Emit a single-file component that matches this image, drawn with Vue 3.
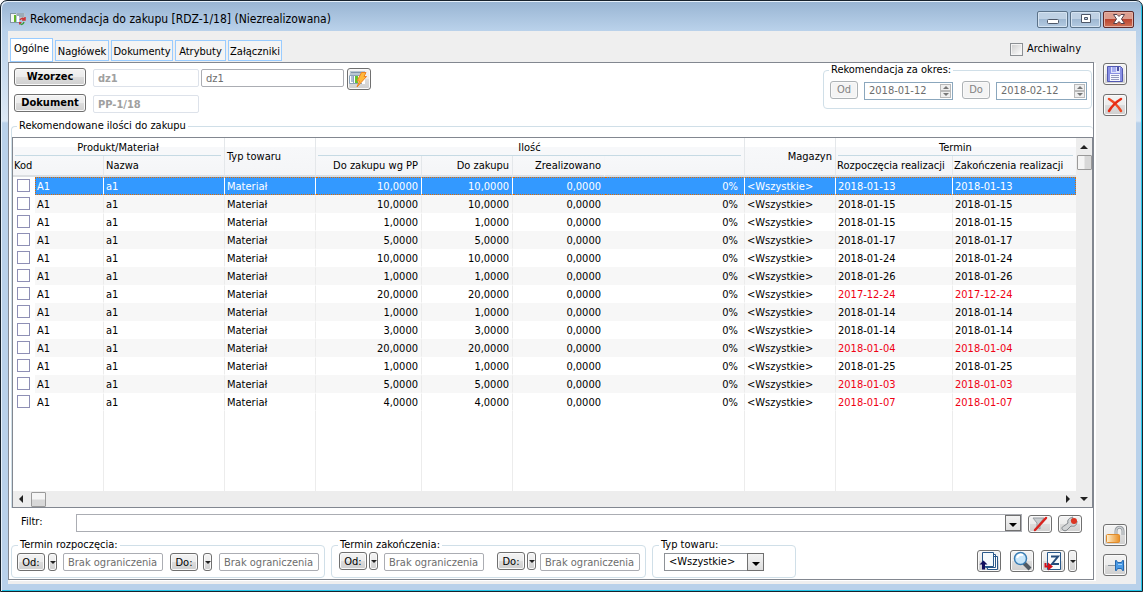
<script setup>
import { ref } from 'vue'

const tabs = ['Ogólne', 'Nagłówek', 'Dokumenty', 'Atrybuty', 'Załączniki']
const active = ref('Ogólne')
const selected = ref(0)
const late = ['2017-12-24', '2018-01-04', '2018-01-03', '2018-01-07']
const rows = [
  ['10,0000', '2018-01-13'],
  ['10,0000', '2018-01-15'],
  ['1,0000', '2018-01-15'],
  ['5,0000', '2018-01-17'],
  ['10,0000', '2018-01-24'],
  ['1,0000', '2018-01-26'],
  ['20,0000', '2017-12-24'],
  ['1,0000', '2018-01-14'],
  ['3,0000', '2018-01-14'],
  ['20,0000', '2018-01-04'],
  ['1,0000', '2018-01-25'],
  ['5,0000', '2018-01-03'],
  ['4,0000', '2018-01-07']
].map(([qty, date]) => ({ qty, date, late: late.includes(date) }))
const ranges = [
  { title: 'Termin rozpoczęcia:', cls: 'start' },
  { title: 'Termin zakończenia:', cls: 'end' }
]
</script>

<template>
  <div class="window">
    <header class="titlebar">
      <svg class="app-icon" width="16" height="14" viewBox="0 0 16 14">
        <path d="M6 1h9v5H6z" fill="#b8c4cc" /><path d="M7 2h7M7 4h7" stroke="#7e93a3" />
        <path d="M0 2h6v8H0z" fill="#f4f7f4" /><path d="M0 1.500h6M0 10.500h9M.5 2v8" stroke="#8196a4" />
        <path d="M4 3h2v7H4z" fill="#62b52a" /><path d="M7 4h2v6H7z" fill="#fff" />
        <path d="M10 8c1-2 3-2 4-1M15 5v3h-3" stroke="#cf3434" stroke-width="1.500" fill="none" />
        <path d="M14 10c-1 3-3 3-4 1" stroke="#3c9a3c" stroke-width="1.500" fill="none" />
        <path d="M9 13v-3h3z" fill="#cf3434" />
      </svg>
      <h1>Rekomendacja do zakupu [RDZ-1/18] (Niezrealizowana)</h1>
      <div class="winbtns">
        <button type="button" aria-label="Minimalizuj"><svg width="14" height="12" viewBox="0 0 14 12"><rect x="1.500" y="6.500" width="11" height="4" rx="1" fill="#fff" stroke="#4d5768" /></svg></button>
        <button type="button" aria-label="Maksymalizuj"><svg width="14" height="12" viewBox="0 0 14 12"><path d="M2.500 1.500h9v8h-9zM5.500 4.500h3v2h-3z" fill="#fff" fill-rule="evenodd" stroke="#4d5768" /></svg></button>
        <button type="button" class="close" aria-label="Zamknij"><svg width="14" height="12" viewBox="0 0 14 12"><path d="M1.500 1.500h3.500l2 2 2-2h3.500L9.500 6l3 4.500H9l-2-2-2 2H1.500L4.500 6z" fill="#fff" stroke="#55404a" /></svg></button>
      </div>
    </header>

    <div class="client">
      <div class="tabrow">
        <nav class="tabs" role="tablist">
          <button v-for="t in tabs" :key="t" type="button" role="tab" :aria-selected="active === t" :class="{ on: active === t }" @click="active = t">{{ t }}</button>
        </nav>
        <label class="archive"><input type="checkbox" />Archiwalny</label>
      </div>

      <div class="body">
        <main class="panel">
          <section class="top">
            <div class="refs">
              <div class="refrow">
                <button type="button" class="btn wide">Wzorzec</button>
                <input class="field code" value="dz1" disabled aria-label="Wzorzec" />
                <input class="field name" value="dz1" aria-label="Nazwa wzorca" />
                <button type="button" class="btn icon" aria-label="Generuj">
                  <svg width="20" height="18" viewBox="0 0 20 18">
                    <path d="M1 1h15v4H1z" fill="#b8c6d2" /><path d="M2 2.500h13" stroke="#8093a8" /><path d="M1 5h15v9H1z" fill="#fff" /><path d="M.5 5.500v8H13M4.500 6v7M1 5.500h15" stroke="#8ba3b8" fill="none" /><path d="M2 7h2M2 9h2M2 11h2" stroke="#5c7eb0" />
                    <path d="M6 6h3v7H6z" fill="#63c22e" />
                    <path d="M12.500 2.500h4.500l-2 4h2.500L8 17l2.500-6H8z" fill="#ffb83a" stroke="#ee8320" />
                  </svg>
                </button>
              </div>
              <div class="refrow">
                <button type="button" class="btn wide">Dokument</button>
                <input class="field code" value="PP-1/18" disabled aria-label="Dokument" />
              </div>
            </div>
            <fieldset class="group period">
              <legend>Rekomendacja za okres:</legend>
              <button type="button" class="btn small dim" disabled>Od</button>
              <div class="spin"><input value="2018-01-12" disabled aria-label="Okres od" /><span class="arrows"><i class="up"></i><i class="down"></i></span></div>
              <button type="button" class="btn small dim second" disabled>Do</button>
              <div class="spin"><input value="2018-02-12" disabled aria-label="Okres do" /><span class="arrows"><i class="up"></i><i class="down"></i></span></div>
            </fieldset>
          </section>

          <fieldset class="group list">
            <legend>Rekomendowane ilości do zakupu</legend>
            <div class="gridbox">
              <table>
                <colgroup><col class="c-check" /><col class="c-code" /><col class="c-name" /><col class="c-mid" /><col class="c-pp" /><col class="c-mid" /><col class="c-done" /><col /><col class="c-mid" /><col class="c-from" /><col class="c-to" /></colgroup>
                <thead>
                  <tr class="h1">
                    <th colspan="3" class="span">Produkt/Materiał</th><th rowspan="2" class="tall">Typ towaru</th><th colspan="4" class="span">Ilość</th><th rowspan="2" class="tall num">Magazyn</th><th colspan="2" class="span last">Termin</th>
                  </tr>
                  <tr class="h2">
                    <th colspan="2" class="kod">Kod</th><th>Nazwa</th><th class="num">Do zakupu wg PP</th><th class="num">Do zakupu</th><th class="num plain">Zrealizowano</th><th></th><th class="tight">Rozpoczęcia realizacji</th><th class="tight last">Zakończenia realizacji</th>
                  </tr>
                </thead>
                <tbody>
                  <tr v-for="(r, i) in rows" :key="i" :class="{ sel: selected === i, late: r.late }" @click="selected = i">
                    <td class="pick"><input type="checkbox" :aria-label="'Zaznacz pozycję ' + (i + 1)" /></td>
                    <td class="first">A1</td><td>a1</td><td class="type">Materiał</td>
                    <td class="num">{{ r.qty }}</td><td class="num">{{ r.qty }}</td><td class="num plain">0,0000</td><td class="num pct">0%</td>
                    <td>&lt;Wszystkie&gt;</td><td class="date">{{ r.date }}</td><td class="date last">{{ r.date }}</td>
                  </tr>
                  <tr class="rest" aria-hidden="true"><td></td><td></td><td></td><td></td><td></td><td></td><td class="plain"></td><td></td><td></td><td></td><td class="last"></td></tr>
                </tbody>
              </table>
              <div class="vbar"><i class="up"></i><b></b><i class="down"></i></div>
              <div class="hbar"><i class="left"></i><b></b><i class="right"></i></div>
            </div>
          </fieldset>

          <section class="filter">
            <label for="filter">Filtr:</label>
            <div class="combo"><input id="filter" /><button type="button" aria-label="Rozwiń"><i class="down"></i></button></div>
            <button type="button" class="btn icon low" aria-label="Wyczyść filtr">
              <svg width="20" height="16" viewBox="0 0 20 16"><path d="M3 2h11l-4 5v6l-3-2V7z" fill="#c9cdd0" stroke="#989da2" /><path d="M16 2 5 14" stroke="#d8231e" stroke-width="2.500" stroke-linecap="round" /></svg>
            </button>
            <button type="button" class="btn icon low" aria-label="Konstruktor filtra">
              <svg width="20" height="16" viewBox="0 0 20 16"><path d="M3 14c-2-2-1-3 1-4l4-3c-1-3 1-5 5-6l-2 4 3 2 3-2c0 4-2 6-6 5l-4 4c-1 1-3 1-4 0z" fill="#d1d3d5" stroke="#82878c" /><circle cx="14" cy="5" r="3" fill="#dc3522" /></svg>
            </button>
          </section>

          <section class="bottom">
            <fieldset v-for="g in ranges" :key="g.cls" class="group range" :class="g.cls">
              <legend>{{ g.title }}</legend>
              <button type="button" class="btn small">Od:</button><button type="button" class="btn drop" aria-label="Opcje od"><i class="down"></i></button>
              <input class="field limit" value="Brak ograniczenia" :aria-label="g.title + ' od'" />
              <button type="button" class="btn small to">Do:</button><button type="button" class="btn drop" aria-label="Opcje do"><i class="down"></i></button>
              <input class="field limit" value="Brak ograniczenia" :aria-label="g.title + ' do'" />
            </fieldset>
            <fieldset class="group kind">
              <legend>Typ towaru:</legend>
              <div class="select"><select aria-label="Typ towaru"><option>&lt;Wszystkie&gt;</option></select><span><i class="down"></i></span></div>
            </fieldset>
            <div class="actions">
              <button type="button" class="btn icon" aria-label="Pobierz dokumenty">
                <svg width="20" height="20" viewBox="0 0 20 20"><path d="M8.500 5.500h10v13h-10zM6.500 3.500h10v13h-10z" fill="#fff" stroke="#28588a" /><path d="M3.500 1.500h11v14h-11z" fill="#f5fafd" stroke="#28588a" /><path d="M.500 13.500l4-4 4 4H6v5H3v-5z" fill="#12105f" /></svg>
              </button>
              <button type="button" class="btn icon look" aria-label="Podgląd">
                <svg width="20" height="20" viewBox="0 0 20 20"><path d="m12 12 6 6" stroke="#515a63" stroke-width="4" /><circle cx="8.500" cy="7.500" r="6" fill="#c9e7fb" stroke="#397db4" stroke-width="1.500" /><path d="M5 7c1-3 3-4 6-3" stroke="#fff" stroke-width="2" fill="none" /></svg>
              </button>
              <button type="button" class="btn icon order" aria-label="Generuj zamówienie">
                <svg width="20" height="20" viewBox="0 0 20 20"><path d="M4.500 1.500h13v17h-13z" fill="#f5fafd" stroke="#28588a" /><path d="M8 5.500h7L9 13h7" stroke="#244c7c" stroke-width="2" fill="none" /><path d="M2.500 12v3.500H6" stroke="#d3101b" stroke-width="2" fill="none" /><path d="m5 11.500 5 4-5 4z" fill="#d3101b" /></svg>
              </button>
              <button type="button" class="btn drop tallbtn" aria-label="Opcje zamówienia"><i class="down"></i></button>
            </div>
          </section>
        </main>

        <aside class="side">
          <button type="button" class="btn icon" aria-label="Zapisz">
            <svg width="20" height="20" viewBox="0 0 20 20"><path d="M2.500 2.500h13l2 2v13h-15z" fill="#8990e3" stroke="#5258b2" /><path d="M6 3h9v6H6z" fill="#dfe3fb" /><path d="M7 3h4v5H7z" fill="#a6adf0" /><path d="M12 3h2v4h-2z" fill="#4d52a5" /><path d="M5 10h10v7H5z" fill="#f6f7ff" /><path d="M6 11.500h8M6 13.500h8M6 15.500h8" stroke="#9298bd" /></svg>
          </button>
          <button type="button" class="btn icon cancel" aria-label="Anuluj">
            <svg width="20" height="20" viewBox="0 0 20 20"><path d="M4 4c5 3 9 7 12 12" stroke="#f04a25" stroke-width="2.500" fill="none" stroke-linecap="round" /><path d="M16 4C11 7 7 11 4 16" stroke="#e62b13" stroke-width="2.500" fill="none" stroke-linecap="round" /></svg>
          </button>
          <button type="button" class="btn icon lock" aria-label="Odblokuj">
            <svg width="20" height="20" viewBox="0 0 20 20"><defs><linearGradient id="gold"><stop stop-color="#fff0cf" /><stop offset="1" stop-color="#e98f25" /></linearGradient></defs><path d="M11 9V6c0-5 7-5 7 0v4" stroke="#989da2" stroke-width="3" fill="none" /><path d="M11 9V6c0-5 7-5 7 0v4" stroke="#e3e6e8" fill="none" /><rect x="1.500" y="9.500" width="13" height="8" rx="1" fill="url(#gold)" stroke="#df8b2c" /></svg>
          </button>
          <button type="button" class="btn icon pin" aria-label="Przypnij">
            <svg width="20" height="20" viewBox="0 0 20 20"><path d="M3 10.500h8" stroke="#8a949c" /><path d="M10.500 5.500h1l1 2h4l1-2h1v10h-1l-1-2h-4l-1 2h-1z" fill="#4a9ae5" stroke="#2467ae" /><path d="M13 9.500h4" stroke="#a5d3fa" /></svg>
          </button>
        </aside>
      </div>
    </div>
  </div>
</template>

<style>
html, body, #app { height: 100%; }
body { background: #fff; }
</style>

<style scoped>
* { box-sizing: border-box; }
#app { display: flow-root; }
.window, .window button, .window input, .window select {
  font: 11px/14px 'DejaVu Sans Condensed', 'Noto Sans', sans-serif;
  color: #000;
}
.window {
  min-height: 100%;
  margin-right: 1px;
  display: flex;
  flex-direction: column;
  border: 1px solid #17222c;
  border-radius: 7px 7px 0 0;
  padding: 2px 6px 7px 7px;
  background: linear-gradient(#98b4d2 0, #b9d1ea 29px, #dce8f5 120px, #b9d1ea 122px);
  box-shadow: inset 1px 1px #e6f0fa, inset -1px -1px #22c5e8;
}
button, input, select { margin: 0; padding: 0; }
h1 { margin: 0; font: 12px/16px 'DejaVu Sans Condensed', 'Noto Sans', sans-serif; white-space: nowrap; }
.titlebar { height: 28px; display: flex; align-items: center; padding: 4px 2px 0 2px; }
.app-icon { margin-right: 4px; }
.winbtns { margin-left: auto; display: flex; gap: 2px; }
.winbtns button {
  width: 31px; height: 17px; display: grid; place-items: center;
  border: 1px solid #5b7289; border-radius: 2px;
  box-shadow: inset 0 0 0 1px #d5e3f1;
  background: linear-gradient(#bfd1e4 50%, #9fb8d2 50%, #b4cbe2);
}
.winbtns .close { background: linear-gradient(#dc9d8e 45%, #bb4530 50%, #cf7358); border-color: #602b2b; box-shadow: inset 0 0 0 1px #e5b1a5; }

.client { flex: 1; display: flex; flex-direction: column; background: #efefef; padding: 0 8px 4px 0; }
.tabrow { height: 31px; display: flex; align-items: flex-end; padding-left: 2px; }
.tabs { display: flex; align-items: flex-end; gap: 2px; }
.tabs button { height: 21px; border: 1px solid #99ccff; background: #f4f4f4; padding: 2px 0 0; min-width: 51px; margin-bottom: 1px; }
.tabs button:nth-child(1) { min-width: 43px; }
.tabs button:nth-child(2), .tabs button:nth-child(5) { min-width: 54px; }
.tabs button:nth-child(3) { min-width: 62px; }
.tabs button.on { height: 24px; background: #fff; padding: 0 0 3px; margin: 0; }
.archive { margin: 0 47px 6px auto; display: flex; align-items: center; gap: 4px; }
input[type='checkbox'] { appearance: none; width: 13px; height: 13px; border: 1px solid #8e8fb5; background: #fff; display: block; }
input[type='checkbox']:checked { background: #8e8fb5; }
.archive input[type='checkbox'] { border-color: #8b8f93; background: linear-gradient(135deg, #ccc, #fff); box-shadow: inset 0 0 0 1px #f4f4f4; }

.body { flex: 1; display: flex; }
.panel { flex: 1; min-width: 0; display: flex; flex-direction: column; background: #fff; border: 1px solid #828790; box-shadow: 2px 1px #fff; }
.side { flex: none; width: 34px; padding: 1px 0 4px 9px; display: flex; flex-direction: column; }
.side .cancel { margin-top: 9px; }
.side .lock { margin-top: auto; }
.side .pin { margin-top: 8px; }

.btn { flex: none; border: 1px solid #707070; border-radius: 3px; background: linear-gradient(#f3f3f3, #ececec 48%, #dcdcdc 52%, #cfcfcf); box-shadow: inset 0 0 0 1px #fafafa; }
.window .btn.wide { width: 72px; height: 18px; font-weight: bold; }
.btn.icon { width: 24px; height: 22px; display: grid; place-items: center; }
.btn.icon.low { height: 18px; }
.btn.small { width: 28px; height: 18px; }
.range .btn.small { padding-top: 1px; }
.window .btn.dim { color: #838383; border-color: #adb2b5; background: #f4f4f4; }
.btn.drop { width: 9px; height: 18px; display: grid; place-items: center; }
.btn.drop.tallbtn { height: 22px; }
i { display: block; width: 0; height: 0; border: 4px solid transparent; }
i.down { border-top: 4px solid #222; border-bottom: 0; }
i.up { border-bottom: 4px solid #222; border-top: 0; }
i.left { border-right: 4px solid #222; border-left: 0; }
i.right { border-left: 4px solid #222; border-right: 0; }
.btn.drop i { border-width: 3px 3px 0; }

.field { height: 18px; border: 1px solid #abadb3; border-radius: 2px; background: #fff; }
.window .field { color: #6d6d6d; padding: 0 4px; }
.field.code { width: 106px; border-color: #dde2ea; }
.window .field.code { font-weight: bold; color: #a0a0a0; }
.field.name { width: 143px; }
.top { display: flex; align-items: flex-start; padding: 0 1px 0 5px; }
.refs { display: flex; flex-direction: column; gap: 4px; padding-top: 5px; }
.refrow { display: flex; align-items: flex-start; }
.refrow .code { margin: 1px 2px 0 7px; }
.refrow .name { margin: 1px 3px 0 0; }

.group { border: 1px solid #d0dfe8; border-radius: 4px; margin: 0; min-width: 0; padding: 0; }
.group legend { padding: 0 2px; margin-left: 5px; height: 14px; white-space: nowrap; }
.period { margin-left: auto; width: 269px; height: 46px; padding: 4px 4px 0 6px; display: flex; align-items: flex-start; }
.period legend { margin-left: -1px; }
.spin { width: 89px; height: 18px; margin: 1px 0 0 6px; display: flex; border: 1px solid #8ba7bd; padding: 1px; }
.period .spin:last-child { width: 91px; }
.spin input { width: 0; flex: 1; min-width: 0; border: 0; padding-left: 3px; background: #fff; }
.window .spin input { color: #6d6d6d; }
.spin + .second { margin-left: 9px; }
.arrows { width: 11px; display: flex; flex-direction: column; }
.arrows i.up, .arrows i.down { border: 1px solid #b9b9b9; width: 11px; height: 7px; background: #eee; display: grid; place-items: center; }
.arrows i::after { content: ''; border: 3px solid transparent; }
.arrows .up::after { border-bottom-color: #777; border-top: 0; }
.arrows .down::after { border-top-color: #777; border-bottom: 0; }

.list { flex: 1; display: flex; flex-direction: column; border-width: 1px 0 0 1px; margin: 6px 0 0 2px; padding-top: 4px; border-radius: 4px 4px 0 0; }
.gridbox { flex: 1; min-height: 320px; display: grid; grid-template: minmax(0, 1fr) 16px / minmax(0, 1fr) 16px; border: 1px solid #828790; }
table { width: 100%; height: 100%; table-layout: fixed; border-collapse: separate; border-spacing: 0; grid-area: 1 / 1; }
.c-check { width: 22px; } .c-code { width: 69px; } .c-name { width: 121px; } .c-mid { width: 91px; } .c-pp { width: 106px; } .c-done { width: 92px; } .c-from { width: 117px; } .c-to { width: 123px; }
th, td { padding: 0 3px 0 2px; white-space: nowrap; overflow: hidden; border-right: 1px solid #ececec; font-weight: normal; text-align: left; }
th { background: #f7f8fa; border-right-color: #e4e7ea; }
.h1, .h1 .span { height: 18px; }
.h2 { height: 21px; }
.h2 th { height: 21px; background: linear-gradient(#f7f8fa, #f4f5f7); border-bottom: 2px solid #dcdfe2; }
.h2 th.kod, .h2 th.tight { padding-left: 1px; padding-right: 0; }
.h2 th.plain { border-right-color: #f5f6f8; }
th.span { text-align: center; padding-top: 1px; background: linear-gradient(#c6dae4, #c6dae4) 2px 100% / calc(100% - 5px) 1px no-repeat, linear-gradient(#fff 50%, #f7f8fa 50%); }
th.tall { background: linear-gradient(#fff 9px, #f7f8fa 9px, #f4f5f7); border-bottom: 2px solid #dcdfe2; }
.num { text-align: right; }
.plain { border-right-color: transparent; }
td.pct { padding-right: 6px; }
.last { border-right: 0; }
tbody td { height: 18px; line-height: 14px; padding-top: 2px; vertical-align: top; border-top: 1px solid transparent; border-bottom: 1px solid transparent; }
tbody tr:nth-child(even):not(.rest) td:not(.pick) { background: #f7f7f7; }
tbody .pick { border-right: 0; padding: 1px 0 0 4px; }
.rest td:first-child { border-right: 0; }
tbody .sel td:not(.pick) { background: #3399ff; color: #fff; border-top: 1px dotted #e06a00; border-bottom: 1px dotted #e06a00; border-right-color: #fff; }
tbody .sel td.plain:not(.pick) { border-right-color: #3399ff; }
tbody .sel td.first { border-left: 1px dotted #e06a00; padding-left: 1px; }
tbody .sel td.last:not(.pick) { border-right: 1px dotted #e06a00; }
.late .date { color: #f00014; }
tbody .rest td { height: auto; padding-top: 0; border-top: 0; border-bottom: 0; }
.vbar, .hbar { background: #ededed; display: flex; align-items: center; }
.vbar { grid-area: 1 / 2 / 3 / 3; flex-direction: column; padding: 7px 0 6px; }
.hbar { grid-area: 2 / 1; padding: 0 6px; }
.vbar b, .hbar b { width: 15px; height: 15px; border: 1px solid #9a9a9a; border-radius: 1px; background: linear-gradient(90deg, #f5f5f5 45%, #d8d8d8 55%); }
.hbar b { background: linear-gradient(#f5f5f5 45%, #d8d8d8 55%); margin-left: 8px; }
.vbar b { margin-top: 6px; }
.vbar i.down { margin-top: auto; }
.hbar i.right { margin-left: auto; }

.filter { display: flex; align-items: flex-start; padding: 6px 11px 0 12px; }
.filter label { width: 55px; padding-top: 1px; }
.combo { flex: 1; height: 18px; display: flex; border: 1px solid #abadb3; margin-right: 6px; }
.combo input { flex: 1; min-width: 0; border: 0; padding: 0 3px; }
.combo button { width: 16px; }
.combo button, .select span { border: 1px solid #707070; background: linear-gradient(#f3f3f3, #dedede); display: grid; place-items: center; }
.combo i, .select i { border-top-color: #000; margin-top: 4px; }
.filter .low { margin-top: 1px; }
.filter .low + .low { margin-left: 6px; }

.bottom { display: flex; align-items: flex-start; padding: 5px 16px 1px 2px; }
.bottom .group { height: 40px; display: flex; align-items: flex-start; padding: 1px 5px 0; }
.bottom legend { margin-left: 1px; }
.bottom .range { width: 314px; }
.bottom .end { width: 315px; margin: 0 6px; padding: 0 5px 0 7px; }
.bottom .end legend { margin-left: -1px; }
.limit { width: 100px; margin-left: 6px; }
.end .limit { margin-top: 1px; }
.range .drop { margin-left: 3px; }
.start .to + .drop { margin-left: 5px; }
.start .limit:last-child { margin-left: 7px; }
.end .drop { margin-left: 2px; }
.end .limit:last-child { margin-left: 4px; }
.to { margin-left: 7px; }
.end .to { margin-left: 13px; }
.bottom .kind { width: 144px; padding-left: 11px; }
.bottom .kind legend { margin-left: -5px; }
.select { width: 100px; height: 18px; position: relative; }
.select select { appearance: none; width: 100%; height: 18px; border: 1px solid #8e9297; border-radius: 0; background: #fff; padding: 0 18px 0 4px; }
.select span { position: absolute; right: 0; top: 0; width: 17px; height: 18px; pointer-events: none; }
.actions { margin-left: auto; padding-top: 12px; display: flex; }
.actions .look { margin-left: 9px; }
.actions .order { margin-left: 7px; }
.actions .drop { margin-left: 3px; }
</style>
